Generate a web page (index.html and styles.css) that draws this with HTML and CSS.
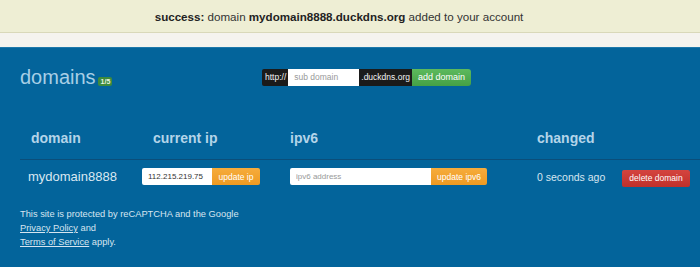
FILE: index.html
```html
<!DOCTYPE html>
<html>
<head>
<meta charset="utf-8">
<link rel="stylesheet" href="styles.css">
</head>
<body>
<div class="alert"><b>success:</b> domain <b>mydomain8888.duckdns.org</b> added to your account</div>
<div class="strip"></div>
<div class="main">
  <div class="top">
    <h1 class="title">domains<span class="badge">1/5</span></h1>
    <form class="addform">
      <span class="addon">http://</span>
      <input class="field sub" type="text" placeholder="sub domain">
      <span class="addon mid">.duckdns.org</span>
      <button type="button" class="btn green">add domain</button>
    </form>
  </div>
  <div class="grid head">
    <div class="h h1">domain</div>
    <div class="h h2">current ip</div>
    <div class="h h3">ipv6</div>
    <div class="h h4">changed</div>
    <div></div>
  </div>
  <div class="grid row">
    <div class="name">mydomain8888</div>
    <div class="group"><input class="field ip" type="text" value="112.215.219.75"><button type="button" class="btn orange">update ip</button></div>
    <div class="group"><input class="field ip6" type="text" placeholder="ipv6 address"><button type="button" class="btn orange">update ipv6</button></div>
    <div class="ago">0 seconds ago</div>
    <div><button type="button" class="btn red">delete domain</button></div>
  </div>
  <div class="footer">
    This site is protected by reCAPTCHA and the Google<br>
    <a href="#">Privacy Policy</a> and<br>
    <a href="#">Terms of Service</a> apply.
  </div>
</div>
</body>
</html>
```
FILE: styles.css
```css
* { box-sizing: border-box; }
html, body { margin: 0; padding: 0; }
body {
  font-family: "Liberation Sans", Arial, sans-serif;
  background: #03649b;
  height: 267px;
  overflow: hidden;
}
.alert {
  height: 33px;
  background: #eeeed4;
  border-bottom: 1px solid #d9d8b9;
  text-align: center;
  font-size: 11.6px;
  line-height: 33px;
  color: #333;
  padding-right: 22px;
}
.alert b { color: #222; }
.strip {
  height: 14px;
  background: #f5f3ee;
}
.main {
  border-top: 1px solid #1e78aa;
  background: #03649b;
  padding: 16px 0 0 20px;
}
.top {
  display: flex;
  align-items: center;
  height: 26px;
}
.title {
  margin: 0;
  font-weight: normal;
  font-size: 20px;
  line-height: 26px;
  color: #a8cfe6;
  width: 242px;
  display: flex;
  align-items: baseline;
}
.badge {
  margin-left: 2px;
  background: #3e8b3c;
  color: #e8f5e4;
  font-size: 7px;
  font-weight: bold;
  line-height: 9px;
  padding: 0 2px 0 3px;
  border-radius: 2px;
}
.addform {
  display: flex;
  height: 17px;
  font-size: 8.5px;
}
.addon {
  background: #1b1b1b;
  color: #f4f4f4;
  line-height: 17px;
  padding: 0 2px 0 3px;
  border-radius: 2px 0 0 2px;
}
.addon.mid { border-radius: 0; padding: 0 2px 0 2px; }
.field {
  border: none;
  outline: none;
  margin: 0;
  height: 17px;
  font-family: "Liberation Sans", Arial, sans-serif;
  font-size: 8px;
  padding: 0 6px;
  background: #fff;
  color: #333;
}
.field::placeholder { color: #999; }
.sub { width: 71px; font-size: 8.5px; }
.btn {
  border: none;
  margin: 0;
  height: 17px;
  font-family: "Liberation Sans", Arial, sans-serif;
  font-size: 8.5px;
  color: #fff;
  padding: 0;
  cursor: pointer;
}
.green {
  width: 59px;
  font-size: 9px;
  background: linear-gradient(#5dba5d, #45a045);
  border-radius: 0 3px 3px 0;
}
.orange {
  background: linear-gradient(#f6ac3c, #ee9a22);
  border-radius: 0 2px 2px 0;
}
.red {
  width: 68px;
  background: linear-gradient(#d4443f, #c0302b);
  border-radius: 2px;
}
.grid {
  display: grid;
  grid-template-columns: 122px 148px 247px 85px 78px;
  align-items: center;
}
.head {
  margin-top: 30px;
  height: 40px;
  border-bottom: 1px solid #0b4e7a;
  padding-bottom: 4px;
}
.h {
  font-size: 14px;
  font-weight: bold;
  color: #b4d4e9;
}
.h1 { padding-left: 11px; }
.h2 { padding-left: 11px; }
.row {
  margin-top: 7px;
  height: 18px;
}
.name {
  padding-left: 8px;
  font-size: 13px;
  color: #dae8f2;
}
.group { display: flex; }
.ip { width: 70px; border-radius: 2px 0 0 2px; }
.ip6 { width: 141px; border-radius: 2px 0 0 2px; }
.group .orange { width: 48px; }
.group .ip6 + .orange { width: 56px; }
.ago {
  font-size: 10.5px;
  color: #d6e6f1;
}
.footer {
  margin-top: 22px;
  font-size: 9.3px;
  line-height: 14px;
  color: #d6e5f0;
}
.footer a { color: #d6e5f0; }
```
